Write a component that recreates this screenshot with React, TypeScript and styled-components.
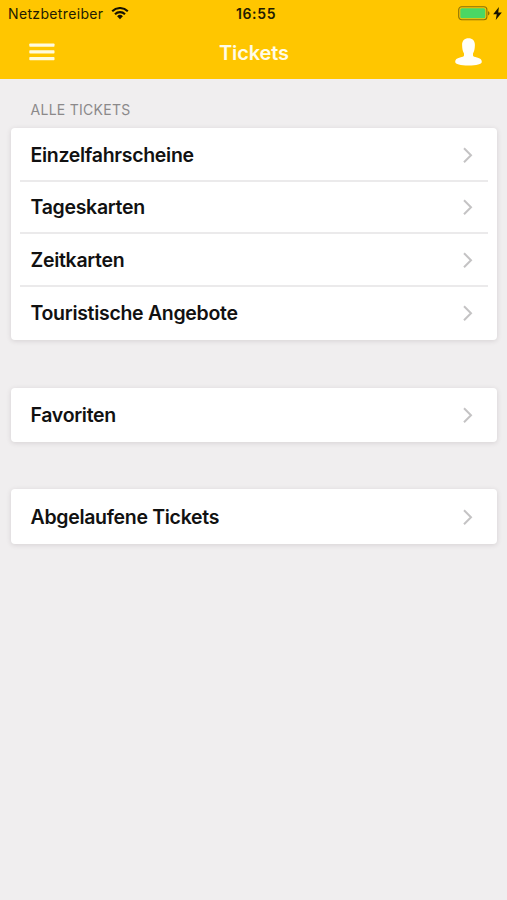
import React from "react";
import styled, { createGlobalStyle } from "styled-components";

const GlobalStyle = createGlobalStyle`
  * { box-sizing: border-box; }
  body { margin: 0; background: #f0eeef; font-family: Inter, "Liberation Sans", sans-serif; }
`;

const Screen = styled.div`
  width: 100%;
  height: 900px;
  overflow: hidden;
  background: #f0eeef;
`;

const Header = styled.header`
  height: 79px;
  background: #ffc600;
`;

const StatusBar = styled.div`
  display: grid;
  grid-template-columns: 1fr auto 1fr;
  align-items: center;
  height: 27px;
  padding: 0 5px 0 8px;
  color: #221b02;
  font-size: 14px;
`;

const Carrier = styled.div`
  display: flex;
  align-items: center;
  gap: 7.5px;
  letter-spacing: 0.35px;
`;

const Clock = styled.div`
  font-weight: 600;
  letter-spacing: 0.65px;
  padding-left: 2px;
`;

const Power = styled.div`
  display: flex;
  justify-content: flex-end;
  align-items: center;
  gap: 3px;
`;

const NavBar = styled.div`
  display: grid;
  grid-template-columns: 1fr auto 1fr;
  align-items: center;
  height: 52px;
  padding: 0 25px 2px 29px;
`;

const Title = styled.h1`
  margin: 0;
  color: #fffce8;
  font-size: 20px;
  font-weight: 600;
  line-height: 24px;
  letter-spacing: -0.1px;
  padding: 1px 3px 0 0;
`;

const IconButton = styled.button<{ $end?: boolean }>`
  display: flex;
  justify-self: ${(p) => (p.$end ? "end" : "start")};
  padding: 0;
  border: 0;
  background: none;
`;

const Content = styled.main`
  padding: 0 10px 0 11px;
`;

const SectionLabel = styled.h2`
  display: flex;
  align-items: center;
  height: 49px;
  margin: 0;
  padding: 12px 0 0 19.5px;
  color: #8b898a;
  font-size: 14px;
  font-weight: 400;
  letter-spacing: 0.28px;
`;

const Card = styled.section`
  margin-bottom: 47.4px;
  padding: 1px 9px 0;
  border-radius: 4px;
  background: #fff;
  box-shadow: 0 1px 5px rgba(60, 50, 55, 0.15);
`;

const Row = styled.a<{ $last?: boolean }>`
  display: flex;
  align-items: center;
  justify-content: space-between;
  height: ${(p) => (p.$last ? 53.4 : 52.6)}px;
  padding: ${(p) => (p.$last ? "0 14px 1px 10.5px" : "1px 14px 0 10.5px")};
  border-bottom: ${(p) => (p.$last ? 0 : 2)}px solid #ebeaeb;
`;

const Label = styled.span`
  color: #111;
  font-size: 19.5px;
  font-weight: 600;
  line-height: 24px;
  letter-spacing: -0.3px;
`;

const Chevron = () => (
  <svg width="12" height="18" viewBox="0 0 12 18" fill="none" stroke="#c4c3c4" strokeWidth="2">
    <path d="M2 2.2 9 9.2 2 16.2" />
  </svg>
);

const Wifi = () => (
  <svg width="18" height="13" viewBox="0 0 18 13" fill="none" stroke="#171302" strokeWidth="2.1">
    <path d="M1.2 4.2a11.2 11.2 0 0 1 15.6 0" />
    <path d="M4 7.2a7.1 7.1 0 0 1 10 0" />
    <path d="M6.1 9.3a4.1 4.1 0 0 1 5.8 0L9 12.2Z" fill="#171302" stroke="none" />
  </svg>
);

const Battery = () => (
  <svg width="32" height="15" viewBox="0 0 32 15">
    <rect x="0.7" y="0.8" width="28.2" height="13" rx="3" fill="none" stroke="#8a7208" strokeWidth="1.1" />
    <rect x="2.3" y="2.3" width="25" height="10" rx="1.5" fill="#4ad764" />
    <path d="M30 5.2C32 5.8 32 8.8 30 9.4Z" fill="#8a7208" />
  </svg>
);

const Bolt = () => (
  <svg width="9" height="13" viewBox="0 0 8 12" fill="#171302">
    <path d="M5.3 0 0 6.7h3.3L2.4 12 8 5H4.7Z" />
  </svg>
);

const Menu = () => (
  <svg width="26" height="18" viewBox="0 0 26 18" fill="#fffbe0">
    <rect x="0.3" y="0.5" width="25.2" height="3.2" rx="0.7" />
    <rect x="0.3" y="7.3" width="25.2" height="3.2" rx="0.7" />
    <rect x="0.3" y="14.1" width="25.2" height="3.2" rx="0.7" />
  </svg>
);

const Person = () => (
  <svg width="27" height="28" viewBox="0 0 27 28" fill="#fffefa">
    <path d="M13.5 0.3C17.5 0.3 20 3 19.9 7C19.8 10.8 19.3 13.5 18 15.5V17.6C18.2 18.6 19.6 19 22 19.5C25.2 20.2 26.8 21.7 26.8 23.7C26.8 26.3 21.5 27.5 13.5 27.5S0.2 26.3 0.2 23.7C0.2 21.7 1.8 20.2 5 19.5C7.4 19 8.8 18.6 9 17.6V15.5C7.7 13.5 7.2 10.8 7.1 7C7 3 9.5 0.3 13.5 0.3Z" />
  </svg>
);

const groups: string[][] = [
  ["Einzelfahrscheine", "Tageskarten", "Zeitkarten", "Touristische Angebote"],
  ["Favoriten"],
  ["Abgelaufene Tickets"],
];

export default function App() {
  return (
    <Screen>
      <GlobalStyle />
      <Header>
        <StatusBar>
          <Carrier>
            <span>Netzbetreiber</span>
            <Wifi />
          </Carrier>
          <Clock>16:55</Clock>
          <Power>
            <Battery />
            <Bolt />
          </Power>
        </StatusBar>
        <NavBar>
          <IconButton aria-label="Menü">
            <Menu />
          </IconButton>
          <Title>Tickets</Title>
          <IconButton $end aria-label="Profil">
            <Person />
          </IconButton>
        </NavBar>
      </Header>
      <Content>
        <SectionLabel>ALLE TICKETS</SectionLabel>
        {groups.map((items) => (
          <Card key={items[0]}>
            {items.map((name, i) => (
              <Row key={name} $last={i === items.length - 1}>
                <Label>{name}</Label>
                <Chevron />
              </Row>
            ))}
          </Card>
        ))}
      </Content>
    </Screen>
  );
}
